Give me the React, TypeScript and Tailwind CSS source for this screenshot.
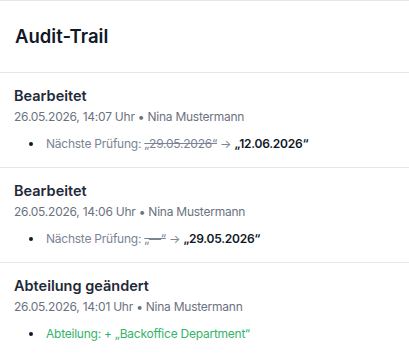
const entries = [
  {
    title: "Bearbeitet",
    meta: "26.05.2026, 14:07 Uhr • Nina Mustermann",
    kind: "change" as const,
    label: "Nächste Prüfung:",
    from: "„29.05.2026“",
    to: "„12.06.2026“",
  },
  {
    title: "Bearbeitet",
    meta: "26.05.2026, 14:06 Uhr • Nina Mustermann",
    kind: "change" as const,
    label: "Nächste Prüfung:",
    from: "„—“",
    to: "„29.05.2026“",
  },
  {
    title: "Abteilung geändert",
    meta: "26.05.2026, 14:01 Uhr • Nina Mustermann",
    kind: "add" as const,
    label: "Abteilung:",
    from: "",
    to: "„Backoffice Department“",
  },
];

export default function App() {
  return (
    <div
      className="min-h-screen w-full bg-white border-t border-[#e5e7eb]"
      style={{ fontFamily: "Inter, 'Noto Sans', sans-serif" }}
    >
      {/* Header */}
      <div className="h-[72px] flex items-center px-[15px] border-b border-[#e5e7eb]">
        <h2 className="text-[18.5px] font-semibold text-[#111827]">Audit-Trail</h2>
      </div>

      {entries.map((e, i) => (
        <div
          key={i}
          className={`px-[14px] pt-[13px] ${i < entries.length - 1 ? "pb-[15px] border-b border-[#e5e7eb]" : "pb-[14px]"}`}
        >
          <div className="text-[14.5px] leading-[20px] font-semibold text-[#1f2937]">{e.title}</div>
          <div className="mt-[3px] text-[12px] leading-[16px] tracking-[-0.02em] text-[#6b7280]">{e.meta}</div>
          <div className="mt-[11px] flex items-center gap-[13px] pl-[15px]">
            <span className="h-[4px] w-[4px] shrink-0 rounded-full bg-[#111827]" />
            <div className="text-[12px] leading-[16px] tracking-[-0.02em]">
              {e.kind === "change" ? (
                <span className="text-[#7b8494]">
                  {e.label} <span className="line-through">{e.from}</span> →{" "}
                  <span className="font-semibold text-[#111827]">{e.to}</span>
                </span>
              ) : (
                <span className="text-[#34b36b]">
                  {e.label} + {e.to}
                </span>
              )}
            </div>
          </div>
        </div>
      ))}
    </div>
  );
}
